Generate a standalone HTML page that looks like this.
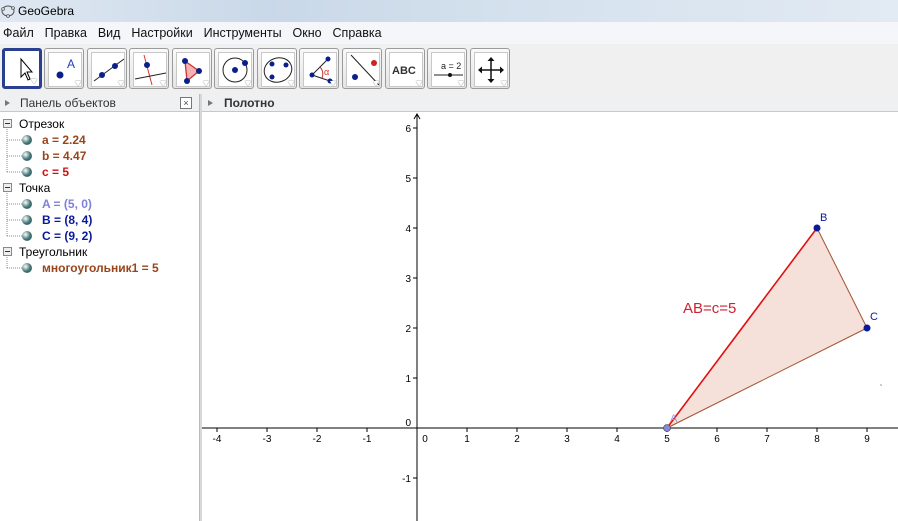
<!DOCTYPE html>
<html><head><meta charset="utf-8"><style>
*{margin:0;padding:0;box-sizing:border-box}
body{width:898px;height:521px;overflow:hidden;background:#fff;font-family:"Liberation Sans",sans-serif;position:relative}
.title{position:absolute;left:0;top:0;width:898px;height:22px;background:linear-gradient(90deg,#dfe8f2,#c9d8e8 30%,#d5e2ee 60%,#e2eaf3);font-size:12px;line-height:22px;padding-left:18px;color:#000}
.menu{position:absolute;left:0;top:22px;width:898px;height:22px;background:#f4f6f9;font-size:12.5px;line-height:22px;padding-left:3px;color:#111;word-spacing:2px}
.tb{position:absolute;left:0;top:44px;width:898px;height:50px;background:#f0f0f0}
.btn{position:absolute;top:4px;width:40px;height:41px;border:1px solid #9a9a9a;border-radius:3px;background:linear-gradient(#fafafa,#e4e4e4)}
.btn::before{content:"";position:absolute;left:3px;top:3px;width:32px;height:33px;background:#fff;border:1px solid #c8c8c8}
.btn::after{content:"";position:absolute;right:2px;bottom:2px;border-top:5px solid #fff;border-left:3px solid transparent;border-right:3px solid transparent;filter:drop-shadow(0 0 .6px #555)}
.btn.sel::before{display:none}
.btn svg{position:absolute;left:2px;top:2px}
.hdr{position:absolute;top:94px;height:18px;background:#eef0f2;border-bottom:1px solid #c8c8c8;font-size:12px;line-height:18px;color:#333}
</style></head><body>
<div class="title">GeoGebra</div>
<svg style="position:absolute;left:1px;top:4px" width="15" height="14"><ellipse cx="7" cy="7" rx="6" ry="5" fill="none" stroke="#555"/><circle cx="2" cy="5" r="1.5" fill="#ccc" stroke="#444" stroke-width=".6"/><circle cx="12" cy="4" r="1.5" fill="#ccc" stroke="#444" stroke-width=".6"/><circle cx="7" cy="12" r="1.5" fill="#ccc" stroke="#444" stroke-width=".6"/></svg>
<div class="menu">Файл&nbsp; Правка&nbsp; Вид&nbsp; Настройки&nbsp; Инструменты&nbsp; Окно&nbsp; Справка</div>
<div class="tb">
<div class="btn sel" style="left:2px;border:3px solid #2a3f8f;background:#fff"><svg width="34" height="34"><path d="M14 6 L14 24 L18 20 L21 27 L23 26 L20 19 L25 19 Z" fill="#fff" stroke="#000"/></svg></div>
<div class="btn" style="left:44px"><svg width="36" height="36"><circle cx="13" cy="24" r="3.5" fill="#0a1f8a"/><text x="20" y="17" font-size="12" fill="#1a3fbf" font-family="Liberation Sans">A</text></svg></div>
<div class="btn" style="left:87px"><svg width="36" height="36"><line x1="4" y1="30" x2="34" y2="8" stroke="#222"/><circle cx="12" cy="24" r="3" fill="#0a1f8a"/><circle cx="25" cy="15" r="3" fill="#0a1f8a"/></svg></div>
<div class="btn" style="left:129px"><svg width="36" height="36"><line x1="12" y1="4" x2="20" y2="34" stroke="#d33"/><line x1="3" y1="28" x2="34" y2="22" stroke="#222"/><circle cx="15" cy="14" r="3" fill="#0a1f8a"/></svg></div>
<div class="btn" style="left:172px"><svg width="36" height="36"><path d="M10 10 L24 20 L12 30Z" fill="#f3b3b3" stroke="#c33" stroke-width="1.3"/><circle cx="10" cy="10" r="3" fill="#0a1f8a"/><circle cx="24" cy="20" r="3" fill="#0a1f8a"/><circle cx="12" cy="30" r="3" fill="#0a1f8a"/></svg></div>
<div class="btn" style="left:214px"><svg width="36" height="36"><circle cx="18" cy="19" r="12" fill="none" stroke="#222"/><circle cx="18" cy="19" r="3" fill="#0a1f8a"/><circle cx="28" cy="12" r="3" fill="#0a1f8a"/></svg></div>
<div class="btn" style="left:257px"><svg width="36" height="36"><ellipse cx="18" cy="19" rx="14" ry="12" fill="none" stroke="#222" transform="rotate(-20 18 19)"/><circle cx="12" cy="13" r="2.5" fill="#0a1f8a"/><circle cx="26" cy="14" r="2.5" fill="#0a1f8a"/><circle cx="12" cy="26" r="2.5" fill="#0a1f8a"/></svg></div>
<div class="btn" style="left:299px"><svg width="36" height="36"><path d="M26 8 L10 24 L28 30" fill="none" stroke="#222"/><path d="M18 16 A10 10 0 0 1 20 27" fill="none" stroke="#c33"/><text x="22" y="24" font-size="9" fill="#c33">α</text><circle cx="26" cy="8" r="2.5" fill="#0a1f8a"/><circle cx="10" cy="24" r="2.5" fill="#0a1f8a"/><circle cx="28" cy="30" r="2.5" fill="#0a1f8a"/></svg></div>
<div class="btn" style="left:342px"><svg width="36" height="36"><line x1="6" y1="4" x2="34" y2="34" stroke="#222"/><circle cx="29" cy="12" r="3" fill="#c22"/><circle cx="10" cy="26" r="3" fill="#0a1f8a"/></svg></div>
<div class="btn" style="left:385px"><svg width="36" height="36"><text x="4" y="23" font-size="11" font-weight="bold" fill="#333" font-family="Liberation Sans">ABC</text></svg></div>
<div class="btn" style="left:427px"><svg width="36" height="36"><text x="11" y="18" font-size="9" fill="#222" font-family="Liberation Sans">a = 2</text><line x1="4" y1="24" x2="33" y2="24" stroke="#222"/><circle cx="20" cy="24" r="2" fill="#111"/></svg></div>
<div class="btn" style="left:470px"><svg width="36" height="36"><path d="M18 8 V30 M7 19 H29" stroke="#111" stroke-width="1.5"/><path d="M18 6 l-3.5 4 h7z M18 32 l-3.5 -4 h7z M5 19 l4 -3.5 v7z M31 19 l-4 -3.5 v7z" fill="#111"/></svg></div>
</div>
<div class="hdr" style="left:0;width:199px;padding-left:20px">Панель объектов</div>
<div style="position:absolute;left:5px;top:100px;border-left:5px solid #777;border-top:3px solid transparent;border-bottom:3px solid transparent"></div>
<div style="position:absolute;left:180px;top:97px;width:12px;height:12px;border:1px solid #777;font-size:9px;line-height:10px;text-align:center;color:#444;background:#fff">×</div>
<div class="hdr" style="left:202px;width:696px;padding-left:22px;font-weight:bold">Полотно</div>
<div style="position:absolute;left:208px;top:100px;border-left:5px solid #777;border-top:3px solid transparent;border-bottom:3px solid transparent"></div>
<div style="position:absolute;left:199px;top:94px;width:3px;height:427px;background:#d8d8d8;border-left:1px solid #bbb"></div>
<svg style="position:absolute;left:0;top:112px" width="199" height="170">
<g fill="none" stroke="#888" stroke-dasharray="1 1"><path d="M7 13 V60 M7 28 H22 M7 44 H22 M7 60 H22 M7 77 V124 M7 92 H22 M7 108 H22 M7 124 H22 M7 141 V156 M7 156 H22"/></g>
<g fill="#eee" stroke="#888"><rect x="3.5" y="7.5" width="8" height="8"/><rect x="3.5" y="71.5" width="8" height="8"/><rect x="3.5" y="135.5" width="8" height="8"/></g>
<g stroke="#333"><line x1="5" y1="11.5" x2="10" y2="11.5"/><line x1="5" y1="75.5" x2="10" y2="75.5"/><line x1="5" y1="139.5" x2="10" y2="139.5"/></g>
<defs><radialGradient id="g" cx=".35" cy=".35"><stop offset="0" stop-color="#fff"/><stop offset="1" stop-color="#3f6e70"/></radialGradient></defs>
<g fill="url(#g)"><circle cx="27" cy="28" r="5"/><circle cx="27" cy="44" r="5"/><circle cx="27" cy="60" r="5"/><circle cx="27" cy="92" r="5"/><circle cx="27" cy="108" r="5"/><circle cx="27" cy="124" r="5"/><circle cx="27" cy="156" r="5"/></g>
<g font-family="Liberation Sans" font-size="12"><text x="19" y="16" fill="#000">Отрезок</text><text x="19" y="80" fill="#000">Точка</text><text x="19" y="144" fill="#000">Треугольник</text>
<g font-weight="bold"><text x="42" y="32" fill="#99441a">a = 2.24</text><text x="42" y="48" fill="#99441a">b = 4.47</text><text x="42" y="64" fill="#cc1111">c = 5</text><text x="42" y="96" fill="#8080d8">A = (5, 0)</text><text x="42" y="112" fill="#0a1a99">B = (8, 4)</text><text x="42" y="128" fill="#0a1a99">C = (9, 2)</text><text x="42" y="160" fill="#99441a">многоугольник1 = 5</text></g></g>
</svg>
<svg style="position:absolute;left:202px;top:112px" width="696" height="409" font-family="Liberation Sans" font-size="10">
<g transform="translate(-202,-112)">
<line x1="202" y1="428" x2="898" y2="428" stroke="#000"/>
<line x1="417" y1="114" x2="417" y2="521" stroke="#000"/>
<path d="M414 119 L417 114 L420 119" fill="none" stroke="#000"/>
<g stroke="#000"><line x1="217" y1="428" x2="217" y2="432"/><line x1="267" y1="428" x2="267" y2="432"/><line x1="317" y1="428" x2="317" y2="432"/><line x1="367" y1="428" x2="367" y2="432"/><line x1="467" y1="428" x2="467" y2="432"/><line x1="517" y1="428" x2="517" y2="432"/><line x1="567" y1="428" x2="567" y2="432"/><line x1="617" y1="428" x2="617" y2="432"/><line x1="667" y1="428" x2="667" y2="432"/><line x1="717" y1="428" x2="717" y2="432"/><line x1="767" y1="428" x2="767" y2="432"/><line x1="817" y1="428" x2="817" y2="432"/><line x1="867" y1="428" x2="867" y2="432"/>
<line x1="413" y1="128" x2="417" y2="128"/><line x1="413" y1="178" x2="417" y2="178"/><line x1="413" y1="228" x2="417" y2="228"/><line x1="413" y1="278" x2="417" y2="278"/><line x1="413" y1="328" x2="417" y2="328"/><line x1="413" y1="378" x2="417" y2="378"/><line x1="413" y1="478" x2="417" y2="478"/></g>
<g fill="#000" text-anchor="middle"><text x="217" y="442">-4</text><text x="267" y="442">-3</text><text x="317" y="442">-2</text><text x="367" y="442">-1</text><text x="425" y="442">0</text><text x="467" y="442">1</text><text x="517" y="442">2</text><text x="567" y="442">3</text><text x="617" y="442">4</text><text x="667" y="442">5</text><text x="717" y="442">6</text><text x="767" y="442">7</text><text x="817" y="442">8</text><text x="867" y="442">9</text></g>
<g fill="#000" text-anchor="end"><text x="411" y="132">6</text><text x="411" y="182">5</text><text x="411" y="232">4</text><text x="411" y="282">3</text><text x="411" y="332">2</text><text x="411" y="382">1</text><text x="411" y="426">0</text><text x="411" y="482">-1</text></g>
<path d="M667 428 L817 228 L867 328Z" fill="#f5e1da" stroke="none"/>
<line x1="817" y1="228" x2="867" y2="328" stroke="#a0522d"/>
<line x1="867" y1="328" x2="667" y2="428" stroke="#a0522d"/>
<line x1="667" y1="428" x2="817" y2="228" stroke="#dd1111" stroke-width="1.6"/>
<circle cx="817" cy="228" r="3.5" fill="#0a1a99"/><circle cx="867" cy="328" r="3.5" fill="#0a1a99"/>
<circle cx="667" cy="428" r="3.5" fill="#8888d8" stroke="#333" stroke-width=".6"/>
<text x="820" y="221" font-size="11" fill="#0a1a99">B</text><text x="870" y="320" font-size="11" fill="#0a1a99">C</text><text x="670" y="422" font-size="11" fill="#9999e0">A</text>
<text x="683" y="313" font-size="15" fill="#cc2233">AB=c=5</text>
<rect x="880" y="384" width="2" height="2" fill="#ccc"/>
</g></svg>
</body></html>
